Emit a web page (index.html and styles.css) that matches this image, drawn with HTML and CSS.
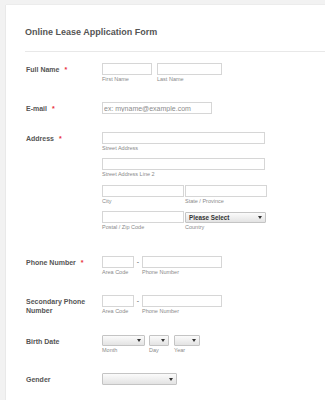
FILE: index.html
```html
<!DOCTYPE html>
<html>
<head>
<meta charset="utf-8">
<link rel="stylesheet" href="styles.css">
</head>
<body>
<div class="page">
  <div class="card">
    <h1 class="title">Online Lease Application Form</h1>
    <div class="divider"></div>
    <div class="rows">

      <div class="row mb19">
        <div class="label">Full Name<span class="req">*</span></div>
        <div class="fields">
          <div class="line gap5">
            <div class="field"><input class="in" style="width:50px"><span class="sub">First Name</span></div>
            <div class="field"><input class="in" style="width:65px"><span class="sub">Last Name</span></div>
          </div>
        </div>
      </div>

      <div class="row mb18">
        <div class="label">E-mail<span class="req">*</span></div>
        <div class="fields">
          <input class="in" style="width:110px" placeholder="ex: myname@example.com">
        </div>
      </div>

      <div class="row mb25">
        <div class="label">Address<span class="req">*</span></div>
        <div class="fields">
          <div class="field g6"><input class="in" style="width:163px"><span class="sub">Street Address</span></div>
          <div class="field g7"><input class="in" style="width:163px"><span class="sub">Street Address Line 2</span></div>
          <div class="line gap1 g6">
            <div class="field"><input class="in" style="width:82px"><span class="sub">City</span></div>
            <div class="field"><input class="in" style="width:82px"><span class="sub">State / Province</span></div>
          </div>
          <div class="line gap1">
            <div class="field"><input class="in" style="width:82px"><span class="sub">Postal / Zip Code</span></div>
            <div class="field">
              <div class="sel country" style="width:81px"><span class="seltext">Please Select</span><svg class="arrow" width="4" height="3" viewBox="0 0 4 3"><path d="M0 0H4L2 3Z" fill="#333"/></svg></div>
              <span class="sub">Country</span>
            </div>
          </div>
        </div>
      </div>

      <div class="row mb19">
        <div class="label">Phone Number<span class="req">*</span></div>
        <div class="fields">
          <div class="line">
            <div class="field"><input class="in" style="width:32px"><span class="sub">Area Code</span></div>
            <div class="dash">-</div>
            <div class="field"><input class="in" style="width:80px"><span class="sub">Phone Number</span></div>
          </div>
        </div>
      </div>

      <div class="row mb20">
        <div class="label">Secondary Phone Number</div>
        <div class="fields">
          <div class="line">
            <div class="field"><input class="in" style="width:32px"><span class="sub">Area Code</span></div>
            <div class="dash">-</div>
            <div class="field"><input class="in" style="width:80px"><span class="sub">Phone Number</span></div>
          </div>
        </div>
      </div>

      <div class="row mb19">
        <div class="label">Birth Date</div>
        <div class="fields">
          <div class="line">
            <div class="field"><div class="sel" style="width:43px"><span></span><svg class="arrow" width="4" height="3" viewBox="0 0 4 3"><path d="M0 0H4L2 3Z" fill="#333"/></svg></div><span class="sub">Month</span></div>
            <div class="field ml4"><div class="sel" style="width:20px"><span></span><svg class="arrow" width="4" height="3" viewBox="0 0 4 3"><path d="M0 0H4L2 3Z" fill="#333"/></svg></div><span class="sub">Day</span></div>
            <div class="field ml5"><div class="sel" style="width:26px"><span></span><svg class="arrow" width="4" height="3" viewBox="0 0 4 3"><path d="M0 0H4L2 3Z" fill="#333"/></svg></div><span class="sub">Year</span></div>
          </div>
        </div>
      </div>

      <div class="row">
        <div class="label">Gender</div>
        <div class="fields">
          <div class="sel tall" style="width:75px"><span></span><svg class="arrow" width="4" height="3" viewBox="0 0 4 3"><path d="M0 0H4L2 3Z" fill="#333"/></svg></div>
        </div>
      </div>

    </div>
  </div>
</div>
</body>
</html>
```
FILE: styles.css
```css
html, body {
  margin: 0;
  padding: 0;
}
body {
  background: #f2f2f2;
  font-family: "Liberation Sans", Arial, sans-serif;
  width: 325px;
  height: 400px;
  overflow: hidden;
}
.page {
  padding: 5px 0 0 6px;
}
.card {
  background: #fff;
  box-shadow: -1px 0 0 #e9e9e9, 0 -1px 0 #ececec;
  padding: 22px 0 0 19px;
  height: 395px;
  box-sizing: border-box;
}
.title {
  margin: 0;
  font-size: 9px;
  line-height: 11px;
  font-weight: bold;
  color: #555;
}
.divider {
  height: 1px;
  background: #e8e8e8;
  margin-top: 13px;
}
.rows {
  padding-top: 11px;
}
.row {
  display: flex;
}
.mb18 { margin-bottom: 18px; }
.mb19 { margin-bottom: 19px; }
.mb20 { margin-bottom: 20px; }
.mb25 { margin-bottom: 25px; }
.label {
  width: 77px;
  flex: none;
  box-sizing: border-box;
  padding: 1.5px 10px 0 1px;
  font-size: 7px;
  line-height: 9px;
  font-weight: bold;
  color: #555;
}
.req {
  color: #e8323c;
  margin-left: 5px;
}
.fields {
  display: flex;
  flex-direction: column;
}
.line {
  display: flex;
}
.gap1 { gap: 1px; }
.gap5 { gap: 5px; }
.g6 { margin-bottom: 6px; }
.g7 { margin-bottom: 7px; }
.ml4 { margin-left: 4px; }
.ml5 { margin-left: 5px; }
.field {
  display: flex;
  flex-direction: column;
}
.in {
  box-sizing: border-box;
  height: 12px;
  margin: 0;
  padding: 0 1px;
  border: 1px solid #d6d6d6;
  border-radius: 0;
  background: #fff;
  font: 7px "Liberation Sans", Arial, sans-serif;
  color: #555;
  outline: none;
}
.in::placeholder {
  color: #8c8c8c;
}
.sub {
  font-size: 5.5px;
  line-height: 8px;
  color: #8a8a8a;
  white-space: nowrap;
}
.sel {
  box-sizing: border-box;
  height: 11px;
  border: 1px solid #c4c4c4;
  border-radius: 1px;
  background: linear-gradient(#fbfbfb, #e3e3e3);
  display: flex;
  align-items: center;
  justify-content: space-between;
  padding: 0 3px 0 3px;
}
.sel.country {
  margin-top: 1px;
}
.sel.tall {
  height: 12px;
}
.seltext {
  font-size: 6.3px;
  font-weight: bold;
  color: #333;
  white-space: nowrap;
}
.arrow {
  display: block;
  flex: none;
}
.dash {
  width: 8px;
  text-align: center;
  font-size: 7px;
  line-height: 12px;
  color: #555;
}
```
